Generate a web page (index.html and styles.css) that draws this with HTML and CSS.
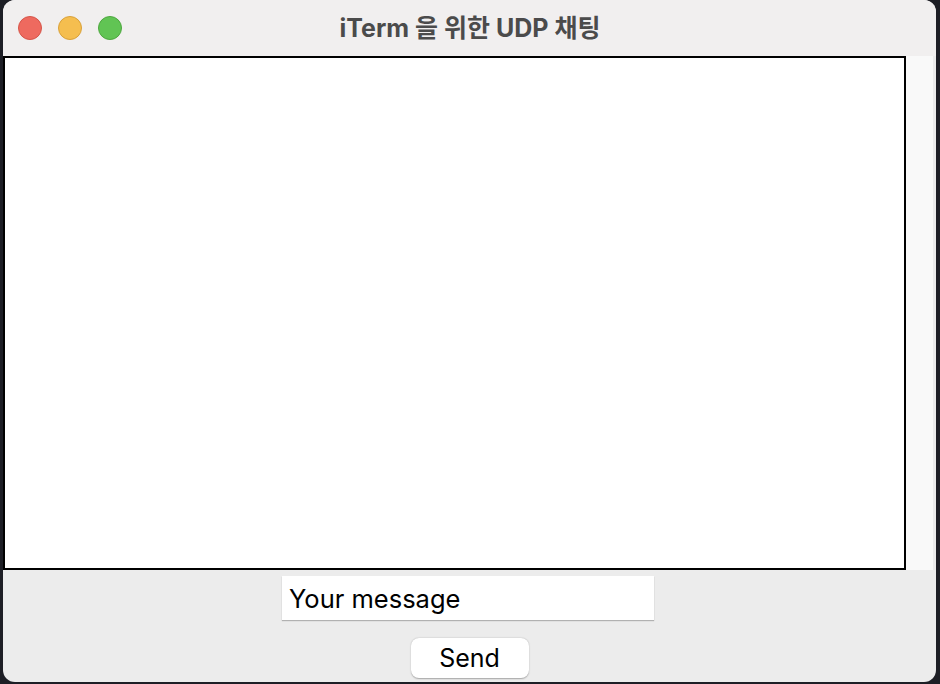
FILE: index.html
```html
<!DOCTYPE html>
<html lang="ko">
<head>
<meta charset="utf-8">
<title>iTerm 을 위한 UDP 채팅</title>
<link rel="stylesheet" href="styles.css">
</head>
<body>
<div class="window">
  <div class="titlebar">
    <div class="lights">
      <span class="light red"></span>
      <span class="light yellow"></span>
      <span class="light green"></span>
    </div>
    <div class="title">iTerm 을 위한 UDP 채팅</div>
  </div>
  <div class="content">
    <div class="log"></div>
    <div class="side"></div>
  </div>
  <div class="bottom">
    <div class="entry">Your message</div>
    <div class="button">Send</div>
  </div>
</div>
</body>
</html>
```
FILE: styles.css
```css
html, body {
  margin: 0;
  padding: 0;
}
body {
  width: 940px;
  height: 684px;
  background: #1d1e25;
  overflow: hidden;
  font-family: "Inter", "Liberation Sans", "Noto Sans CJK KR", sans-serif;
}
.window {
  margin-left: 3px;
  width: 933px;
  height: 682px;
  border-radius: 12px;
  overflow: hidden;
  background: #ececec;
  display: flex;
  flex-direction: column;
}
.titlebar {
  height: 56px;
  background: #f1efef;
  display: flex;
  align-items: center;
  position: relative;
  flex: none;
}
.lights {
  display: flex;
  gap: 16px;
  padding-left: 15px;
}
.light {
  width: 24px;
  height: 24px;
  border-radius: 50%;
  box-sizing: border-box;
}
.red { background: #ee6a5f; border: 1px solid #d65549; }
.yellow { background: #f5be4f; border: 1px solid #d9a13a; }
.green { background: #61c454; border: 1px solid #4ea73f; }
.title {
  position: absolute;
  left: 0;
  right: 0;
  top: 0;
  height: 56px;
  line-height: 56px;
  text-align: center;
  font-family: "Inter", "Noto Sans CJK KR", sans-serif;
  font-weight: 700;
  font-size: 25px;
  color: #4b4b4b;
  padding-left: 1px;
}
.content {
  display: flex;
  height: 514px;
  flex: none;
}
.log {
  width: 903px;
  height: 514px;
  box-sizing: border-box;
  border: 2px solid #000;
  background: #fff;
}
.side {
  flex: 1;
  background: #f9f9f9;
  border-right: 3px solid #ebebeb;
}
.bottom {
  flex: 1;
  display: flex;
  flex-direction: column;
  align-items: center;
  padding-top: 6px;
  box-sizing: border-box;
}
.entry {
  width: 372px;
  height: 44px;
  margin-left: -3px;
  box-sizing: border-box;
  background: #fff;
  box-shadow: 0 1px 1px rgba(0,0,0,0.25);
  font-size: 25.5px;
  line-height: 46px;
  padding-left: 7px;
  color: #000;
}
.button {
  margin-top: 18px;
  width: 118px;
  height: 40px;
  border-radius: 8px;
  background: #fff;
  box-shadow: 0 0.5px 1.5px rgba(0,0,0,0.3);
  text-align: center;
  font-size: 25px;
  line-height: 40px;
  color: #000;
}
```
